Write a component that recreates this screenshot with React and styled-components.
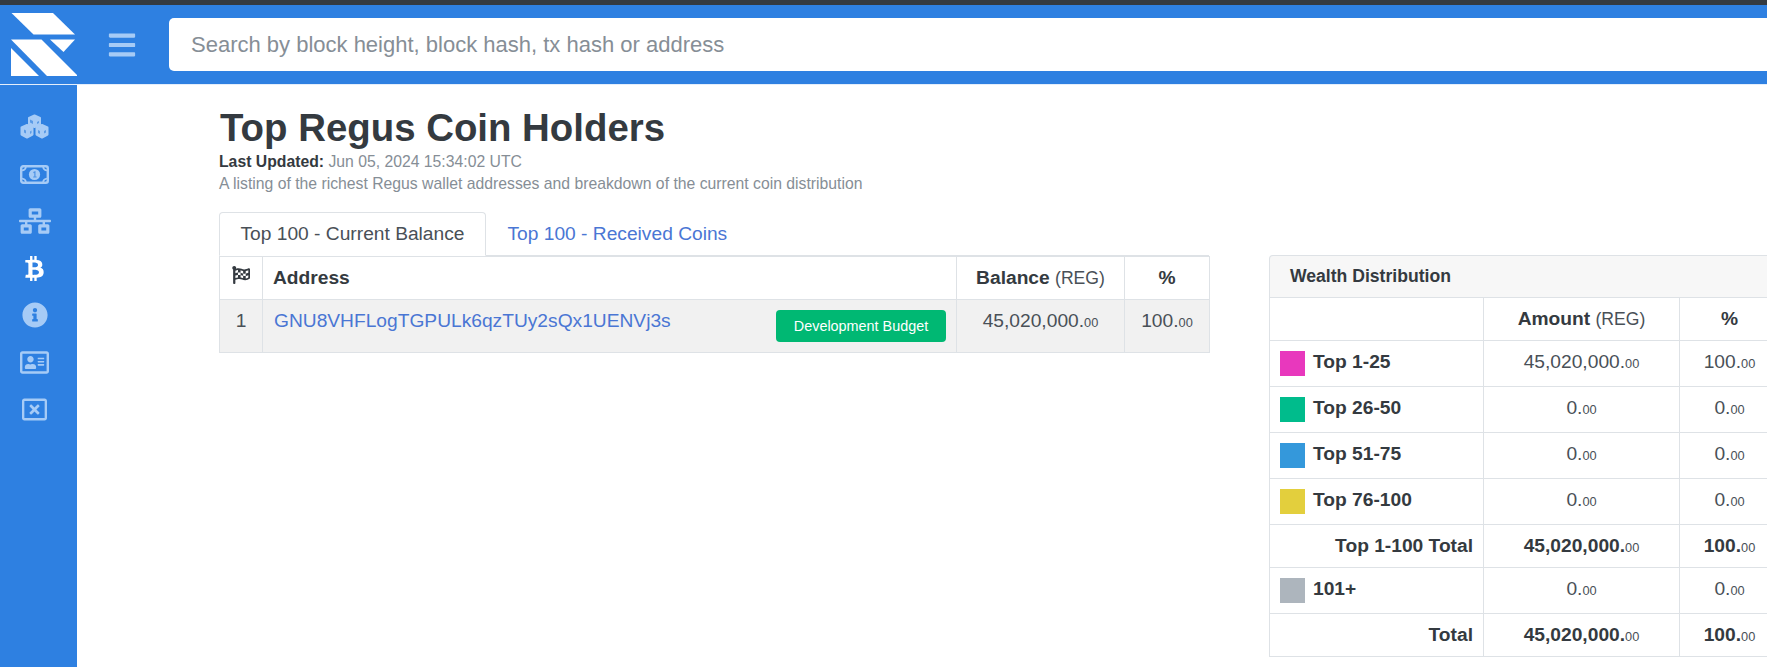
import React from "react";
import styled, { createGlobalStyle } from "styled-components";
import {
  FaBars,
  FaBtc,
  FaFlagCheckered,
  FaInfoCircle,
  FaNetworkWired,
  FaRegAddressCard,
  FaRegWindowClose,
} from "react-icons/fa";

const GlobalStyle = createGlobalStyle`
  html, body {
    margin: 0;
    padding: 0;
    height: 100%;
    overflow: hidden;
    background: #fff;
    color: #343a40;
    font-family: "Liberation Sans", Arial, sans-serif;
    font-size: 19.2px;
  }
  * { box-sizing: border-box; }
`;

const Page = styled.div`
  width: 1767px;
  height: 667px;
  overflow: hidden;
  display: flex;
  flex-direction: column;
`;

const Header = styled.header`
  flex: none;
  height: 85px;
  display: flex;
  align-items: center;
  background: #2e80e1;
  border-top: 5px solid #343a40;
  border-bottom: 1px solid #e4eefb;
`;

const LogoBox = styled.div`
  flex: none;
  width: 77px;
  height: 79px;
  display: flex;
  align-items: center;
  justify-content: center;
`;

const MenuButton = styled.button`
  flex: none;
  width: 92px;
  height: 30px;
  padding: 0 0 0 30px;
  border: 0;
  background: none;
  display: flex;
  align-items: center;
  color: #a6cbf6;
  font-size: 30px;
`;

const SearchInput = styled.input`
  flex: none;
  width: 1700px;
  height: 53px;
  padding: 0 22px;
  border: 0;
  border-radius: 5px;
  background: #fff;
  font-family: inherit;
  font-size: 22px;
  &::placeholder {
    color: #868e96;
    opacity: 1;
  }
`;

const Body = styled.div`
  flex: 1;
  min-height: 0;
  display: flex;
`;

const Sidebar = styled.nav`
  flex: none;
  width: 77px;
  padding: 18px 8px 0 0;
  background: #2e80e1;
  display: flex;
  flex-direction: column;
`;

const SideItem = styled.a`
  height: 47.2px;
  display: flex;
  align-items: center;
  justify-content: center;
  color: ${({ $active }) => ($active ? "#fff" : "#a6cbf6")};
  font-size: ${({ $size }) => $size}px;
`;

const Main = styled.main`
  flex: none;
  padding: 21px 0 0 142px;
`;

const Title = styled.h1`
  margin: 0 0 0 1px;
  font-size: 38.4px;
  line-height: 44px;
  font-weight: 700;
`;

const Updated = styled.div`
  font-size: 15.75px;
  line-height: 21px;
  margin-top: 1px;
  color: #868e96;
  strong {
    color: #343a40;
  }
`;

const Lead = styled.p`
  margin: 1px 0 0;
  font-size: 15.75px;
  line-height: 21px;
  color: #868e96;
`;

const Columns = styled.div`
  display: grid;
  grid-template-columns: 990px 510px;
  column-gap: 60px;
  align-items: start;
  margin-top: 18px;
`;

const Tabs = styled.div`
  display: flex;
  height: 44px;
  border-bottom: 1px solid #dee2e6;
`;

const Tab = styled.a`
  height: 44px;
  padding: 0 20.5px;
  display: flex;
  align-items: center;
  border: 1px solid ${({ $active }) => ($active ? "#dee2e6" : "transparent")};
  border-bottom-color: ${({ $active }) => ($active ? "#fff" : "transparent")};
  border-radius: 4px 4px 0 0;
  background: ${({ $active }) => ($active ? "#fff" : "transparent")};
  color: ${({ $active }) => ($active ? "#495057" : "#4a76d4")};
`;

const Table = styled.table`
  width: 100%;
  table-layout: fixed;
  border-collapse: collapse;
  line-height: 24px;
`;

const Th = styled.th`
  padding: 9px 10px;
  border: 1px solid #dee2e6;
  font-weight: 700;
  text-align: ${({ $align }) => $align || "center"};
  small {
    font-size: 17.6px;
    line-height: 1;
    font-weight: 400;
    color: #495057;
  }
`;

const Td = styled.td`
  padding: ${({ $tall }) => ($tall ? "9px 10px 10px" : "9px 10px")};
  border: 1px solid #dee2e6;
  vertical-align: top;
  text-align: ${({ $align }) => $align || "center"};
  font-weight: ${({ $bold }) => ($bold ? 700 : 400)};
  color: ${({ $bold }) => ($bold ? "#343a40" : "#495057")};
`;

const ShadedRow = styled.tr`
  background: #f1f1f1;
`;

const AddressLink = styled.a`
  margin-left: 1px;
  color: #4a76d4;
`;

const Badge = styled.span`
  float: right;
  width: 170px;
  height: 32px;
  margin-top: 1px;
  border-radius: 4px;
  background: #00b873;
  color: #fff;
  font-size: 14.4px;
  line-height: 32px;
  text-align: center;
`;

const Cents = styled.small`
  font-size: 12.8px;
  line-height: 1;
  font-weight: 400;
  color: #495057;
`;

const Card = styled.section`
  margin-top: 43px;
`;

const CardHeader = styled.div`
  height: 42px;
  padding: 0 20px;
  display: flex;
  align-items: center;
  background: #f7f7f7;
  border: 1px solid #dee2e6;
  border-bottom: 0;
  border-radius: 4px 4px 0 0;
  font-size: 17.6px;
  font-weight: 700;
`;

const Tier = styled.div`
  display: flex;
  align-items: flex-start;
  gap: 8px;
  font-weight: 700;
  color: #343a40;
`;

const Swatch = styled.span`
  flex: none;
  width: 25px;
  height: 25px;
  margin: 1px 0;
  background: ${({ $color }) => $color};
`;

const Logo = () => (
  <svg width="77" height="79" viewBox="0 5 77 79" fill="#fff">
    <polygon points="11.5,13 53,13 75,34.5 33.5,34.5" />
    <polygon points="11,39.5 41.5,39.5 78,76 47,76" />
    <polygon points="11,48 39,76 11,76" />
    <polygon points="50,39.5 75,39.5 63.5,52" />
  </svg>
);

// the packaged cubes icon is too thin for this one, the original is nearly solid
const CubesIcon = () => (
  <svg width="29" height="25" viewBox="0 0 29 25">
    <g fill="#a6cbf6" stroke="#a6cbf6" strokeWidth="2" strokeLinejoin="round">
      <polygon points="14.5,1.5 20,4 20,10.5 14.5,13 9,10.5 9,4" />
      <polygon points="7,11 12.5,13.5 12.5,20.5 7,23.5 1.5,20.5 1.5,13.5" />
      <polygon points="22,11 27.5,13.5 27.5,20.5 22,23.5 16.5,20.5 16.5,13.5" />
    </g>
    <g fill="#5b9be6">
      <polygon points="10,5.5 13,7 13,10 10,8.5" />
      <polygon points="17,8 19,7 19,9 17,10" />
      <polygon points="4,15.5 6,16.5 6,19.5 4,18.5" />
      <polygon points="10,17.5 11.5,16.5 11.5,19 10,20" />
      <polygon points="24,17 26,16 26,18.5 24,19.5" />
      <polygon points="18,16 20,17 20,20 18,19" />
    </g>
  </svg>
);

const BillIcon = () => (
  <svg width="29" height="20" viewBox="0 -1 29 20">
    <rect x="1.2" y="1.2" width="26.6" height="16.6" rx="2" fill="none" stroke="#a6cbf6" strokeWidth="2.4" />
    <path d="M2 5.5 Q5.5 5 6 2 M27 5.5 Q23.5 5 23 2 M2 13.5 Q5.5 14 6 17 M27 13.5 Q23.5 14 23 17" fill="none" stroke="#a6cbf6" strokeWidth="1.6" />
    <circle cx="14.5" cy="9.5" r="5.6" fill="#a6cbf6" />
    <path d="M13.4 7.6 L14.9 6.9 V12 M13.2 12 H16.6" fill="none" stroke="#4f93e4" strokeWidth="1.2" />
  </svg>
);

const Amount = ({ whole }) => (
  <>
    {whole}.<Cents>00</Cents>
  </>
);

const sideItems = [
  { icon: CubesIcon, size: 29 },
  { icon: BillIcon, size: 29 },
  { icon: FaNetworkWired, size: 32 },
  { icon: FaBtc, size: 25, active: true },
  { icon: FaInfoCircle, size: 26 },
  { icon: FaRegAddressCard, size: 29 },
  { icon: FaRegWindowClose, size: 25 },
];

const tiers = [
  { label: "Top 1-25", color: "#e838bd", amount: "45,020,000", pct: "100" },
  { label: "Top 26-50", color: "#00bc8c", amount: "0", pct: "0" },
  { label: "Top 51-75", color: "#3498db", amount: "0", pct: "0" },
  { label: "Top 76-100", color: "#e3cf3d", amount: "0", pct: "0" },
];

export default function App() {
  return (
    <Page>
      <GlobalStyle />
      <Header>
        <LogoBox>
          <Logo />
        </LogoBox>
        <MenuButton aria-label="menu">
          <FaBars />
        </MenuButton>
        <SearchInput placeholder="Search by block height, block hash, tx hash or address" />
      </Header>
      <Body>
        <Sidebar>
          {sideItems.map(({ icon: Icon, size, active }, i) => (
            <SideItem key={i} $size={size} $active={active}>
              <Icon />
            </SideItem>
          ))}
        </Sidebar>
        <Main>
          <Title>Top Regus Coin Holders</Title>
          <Updated>
            <strong>Last Updated:</strong> Jun 05, 2024 15:34:02 UTC
          </Updated>
          <Lead>A listing of the richest Regus wallet addresses and breakdown of the current coin distribution</Lead>
          <Columns>
            <div>
              <Tabs>
                <Tab $active>Top 100 - Current Balance</Tab>
                <Tab>Top 100 - Received Coins</Tab>
              </Tabs>
              <Table>
                <colgroup>
                  <col width="43" />
                  <col width="694" />
                  <col width="168" />
                  <col width="85" />
                </colgroup>
                <thead>
                  <tr>
                    <Th>
                      <FaFlagCheckered size={18} />
                    </Th>
                    <Th $align="left">Address</Th>
                    <Th>
                      Balance <small>(REG)</small>
                    </Th>
                    <Th>%</Th>
                  </tr>
                </thead>
                <tbody>
                  <ShadedRow>
                    <Td $tall>1</Td>
                    <Td $tall $align="left">
                      <AddressLink>GNU8VHFLogTGPULk6qzTUy2sQx1UENVj3s</AddressLink>
                      <Badge>Development Budget</Badge>
                    </Td>
                    <Td $tall>
                      <Amount whole="45,020,000" />
                    </Td>
                    <Td $tall>
                      <Amount whole="100" />
                    </Td>
                  </ShadedRow>
                </tbody>
              </Table>
            </div>
            <Card>
              <CardHeader>Wealth Distribution</CardHeader>
              <Table>
                <colgroup>
                  <col width="214" />
                  <col width="196" />
                  <col width="100" />
                </colgroup>
                <thead>
                  <tr>
                    <Th />
                    <Th>
                      Amount <small>(REG)</small>
                    </Th>
                    <Th>%</Th>
                  </tr>
                </thead>
                <tbody>
                  {tiers.map((t) => (
                    <tr key={t.label}>
                      <Td $align="left">
                        <Tier>
                          <Swatch $color={t.color} />
                          {t.label}
                        </Tier>
                      </Td>
                      <Td>
                        <Amount whole={t.amount} />
                      </Td>
                      <Td>
                        <Amount whole={t.pct} />
                      </Td>
                    </tr>
                  ))}
                  <tr>
                    <Td $align="right" $bold>
                      Top 1-100 Total
                    </Td>
                    <Td $bold>
                      <Amount whole="45,020,000" />
                    </Td>
                    <Td $bold>
                      <Amount whole="100" />
                    </Td>
                  </tr>
                  <tr>
                    <Td $align="left">
                      <Tier>
                        <Swatch $color="#adb5bd" />
                        101+
                      </Tier>
                    </Td>
                    <Td>
                      <Amount whole="0" />
                    </Td>
                    <Td>
                      <Amount whole="0" />
                    </Td>
                  </tr>
                  <tr>
                    <Td $align="right" $bold>
                      Total
                    </Td>
                    <Td $bold>
                      <Amount whole="45,020,000" />
                    </Td>
                    <Td $bold>
                      <Amount whole="100" />
                    </Td>
                  </tr>
                </tbody>
              </Table>
            </Card>
          </Columns>
        </Main>
      </Body>
    </Page>
  );
}
